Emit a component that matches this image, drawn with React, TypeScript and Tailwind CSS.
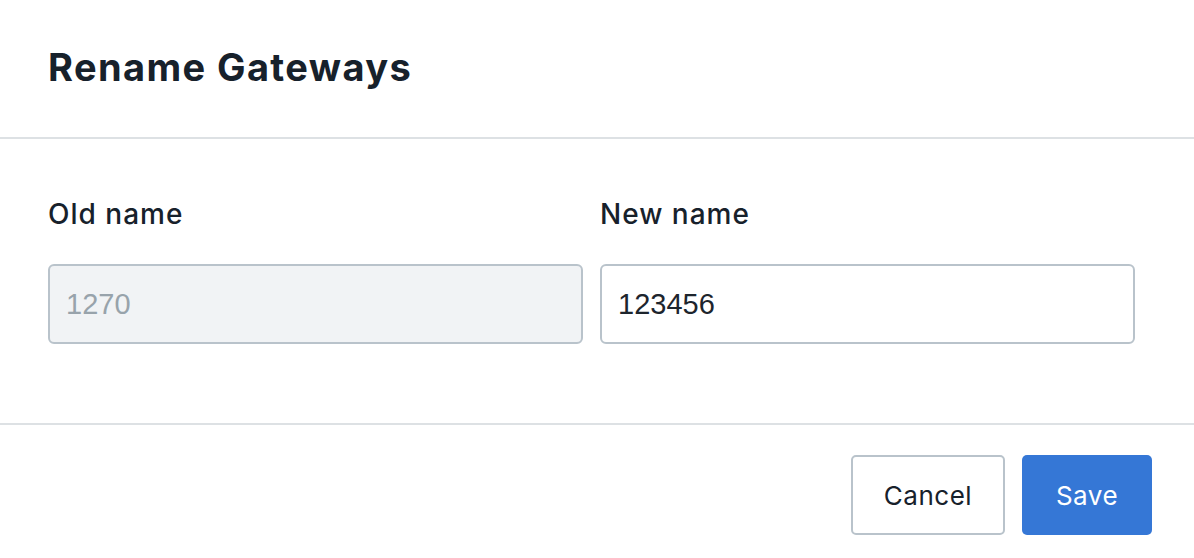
import React from 'react';

export default function App() {
  return (
    <div className="w-[1194px] h-[558px] bg-white text-[#17212b] font-['Inter',sans-serif] overflow-hidden">
      {/* Header */}
      <div className="h-[139px] border-b-2 border-[#dde1e4] flex items-center px-[48px] pb-[4px]">
        <h1 className="text-[38px] font-bold tracking-[1.4px] leading-none">Rename Gateways</h1>
      </div>

      {/* Body */}
      <div className="h-[286px] border-b-2 border-[#dde1e4] px-[48px] pt-[58px]">
        <div className="grid grid-cols-[535px_535px] gap-x-[17px]">
          <label className="text-[28px] font-medium tracking-[1px] leading-[34px]">Old name</label>
          <label className="text-[28px] font-medium tracking-[1px] leading-[34px]">New name</label>
          <input
            disabled
            value="1270"
            readOnly
            className="mt-[33px] h-[80px] rounded-[6px] border-2 border-[#b9c3cb] bg-[#f1f3f5] px-[16px] text-[29px] text-[#98a3ab] font-['Liberation_Sans',sans-serif] outline-none"
          />
          <input
            defaultValue="123456"
            className="mt-[33px] h-[80px] rounded-[6px] border-2 border-[#b9c3cb] bg-white px-[16px] text-[29px] text-[#1d252d] font-['Liberation_Sans',sans-serif] outline-none"
          />
        </div>
      </div>

      {/* Footer */}
      <div className="flex justify-end gap-[17px] pr-[42px] pt-[30px]">
        <button className="w-[154px] h-[80px] rounded-[5px] border-2 border-[#b9c3cb] bg-white text-[26px] tracking-[0.5px] text-[#17212b]">
          Cancel
        </button>
        <button className="w-[130px] h-[80px] rounded-[5px] bg-[#3577d6] text-[26px] tracking-[0.5px] text-white">
          Save
        </button>
      </div>
    </div>
  );
}
